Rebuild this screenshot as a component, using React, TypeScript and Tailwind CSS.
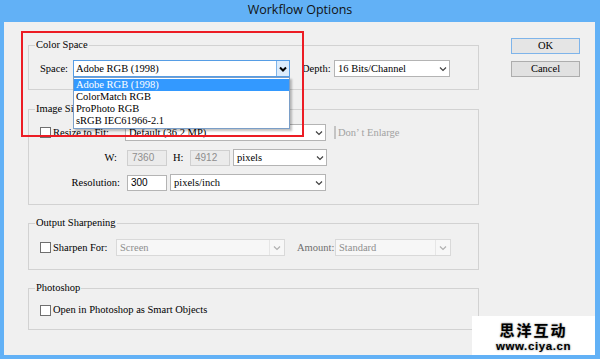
import React from "react";

const UI = { fontFamily: '"Liberation Serif", "Times New Roman", serif' };
const SANS = { fontFamily: '"Liberation Sans", Arial, sans-serif' };

function Chevron({ color = "#404040", bold = false }: { color?: string; bold?: boolean }) {
  return (
    <svg width="8" height="6" viewBox="0 0 8 6">
      <polyline
        points="1,1.5 4,4.5 7,1.5"
        fill="none"
        stroke={color}
        strokeWidth={bold ? 2 : 1.2}
      />
    </svg>
  );
}

function Select({
  cls,
  text,
  disabled = false,
}: {
  cls: string;
  text: string;
  disabled?: boolean;
}) {
  return (
    <div
      className={
        "h-[17px] flex items-center border " +
        (disabled
          ? "border-[#d9d9d9] bg-[#f7f7f7] text-[#8e8e8e] "
          : "border-[#b4b4b4] bg-white text-black ") +
        cls
      }
    >
      <span className="flex-1 pl-[3px] whitespace-nowrap overflow-hidden leading-[15px]">{text}</span>
      {disabled ? (
        <span className="w-[15px] h-full flex items-center justify-center border-l border-[#e6e6e6]">
          <Chevron color="#b0b0b0" />
        </span>
      ) : (
        <span className="w-[13px] h-full flex items-center justify-center">
          <Chevron />
        </span>
      )}
    </div>
  );
}

function Check({ disabled = false }: { disabled?: boolean }) {
  return (
    <span
      className={
        "w-[11px] h-[11px] border shrink-0 " +
        (disabled ? "border-[#c4c4c4] bg-[#e6e6e6]" : "border-[#6f6f6f] bg-white")
      }
    />
  );
}

function Group({
  title,
  cls,
  children,
}: {
  title: string;
  cls: string;
  children: React.ReactNode;
}) {
  return (
    <fieldset className={"border border-[#d2d2d2] " + cls}>
      <legend className="ml-[6px] px-[1px] leading-[12px] h-[12px]">{title}</legend>
      <div className="pl-[11px]">{children}</div>
    </fieldset>
  );
}

export default function App() {
  return (
    <div
      className="w-[600px] h-[359px] bg-[#62b1f6] flex flex-col relative overflow-hidden text-[10.5px] text-black"
      style={UI}
    >
      <div
        className="h-[22px] flex items-center justify-center text-[12.5px] text-[#111] pb-[1px]"
        style={{ fontFamily: '"Open Sans", "Noto Sans", sans-serif' }}
      >
        Workflow Options
      </div>
      <div className="flex-1 ml-[4px] mr-[5px] mb-[4px] bg-[#f0f0f0] flex pt-[16px] pl-[24px]">
        <div className="w-[451px] flex flex-col mt-[1px]">
          <Group title="Color Space" cls="pt-[9px] pb-[12px]">
            <div className="flex items-center h-[17px]">
              <span className="w-[33px]">Space:</span>
              <div className="h-[17px] w-[217px] flex items-center border border-[#569de5] bg-white">
                <span className="flex-1 pl-[2px] leading-[15px]">Adobe RGB (1998)</span>
                <span className="w-[13px] h-full flex items-center justify-center bg-[#dcecfc] border-l border-[#7eb4ea]">
                  <Chevron color="#000" bold />
                </span>
              </div>
              <span className="ml-[12px] w-[32px]">Depth:</span>
              <Select cls="w-[116px]" text="16 Bits/Channel" />
            </div>
          </Group>

          <Group title="Image Size" cls="mt-[13px] pt-[9px] pb-[13px]">
            <div className="flex items-center h-[17px]">
              <Check />
              <span className="ml-[2px] w-[72px]">Resize to Fit:</span>
              <Select cls="w-[201px]" text="Default  (36.2 MP)" />
              <span className="ml-[8px]">
                <Check disabled />
              </span>
              <span className="ml-[2px] text-[#a2a2a2]">Don’ t Enlarge</span>
            </div>
            <div className="flex items-center h-[17px] mt-[8px]">
              <span className="w-[77px] text-right">W:</span>
              <span
                className="ml-[10px] w-[40px] h-[16px] border border-[#cfcfcf] bg-[#ebebeb] text-[#8e8e8e] text-[10px] pl-[4px] leading-[14px]"
                style={SANS}
              >
                7360
              </span>
              <span className="ml-[6px] w-[17px]">H:</span>
              <span
                className="w-[40px] h-[16px] border border-[#cfcfcf] bg-[#ebebeb] text-[#8e8e8e] text-[10px] pl-[4px] leading-[14px]"
                style={SANS}
              >
                4912
              </span>
              <Select cls="ml-[3px] w-[94px]" text="pixels" />
            </div>
            <div className="flex items-center h-[17px] mt-[8px]">
              <span className="w-[80px] text-right">Resolution:</span>
              <span
                className="ml-[7px] w-[40px] h-[16px] border border-[#b4b4b4] bg-white text-black text-[10px] pl-[3px] leading-[14px]"
                style={SANS}
              >
                300
              </span>
              <Select cls="ml-[3px] w-[156px]" text="pixels/inch" />
            </div>
          </Group>

          <Group title="Output Sharpening" cls="mt-[12px] pt-[10px] pb-[13px]">
            <div className="flex items-center h-[17px]">
              <Check />
              <span className="ml-[2px] w-[63px]">Sharpen For:</span>
              <Select cls="w-[169px]" text="Screen" disabled />
              <span className="ml-[12px] w-[38px] text-[#6e6e6e]">Amount:</span>
              <Select cls="w-[116px]" text="Standard" disabled />
            </div>
          </Group>

          <Group title="Photoshop" cls="mt-[12px] pt-[8px] pb-[11px]">
            <div className="flex items-center h-[16px]">
              <Check />
              <span className="ml-[2px]">Open in Photoshop as Smart Objects</span>
            </div>
          </Group>
        </div>

        <div className="ml-[32px] flex flex-col gap-[7px]">
          <button className="w-[69px] h-[16px] border border-[#7eb4ea] bg-[#e5e5e5] text-[10.5px] leading-[14px]">
            OK
          </button>
          <button className="w-[69px] h-[16px] border border-[#adadad] bg-[#e1e1e1] text-[10.5px] leading-[14px]">
            Cancel
          </button>
        </div>
      </div>

      {/* open dropdown list */}
      <div className="absolute left-[73px] top-[77px] w-[217px] h-[52px] border border-[#7a9ec8] bg-white shadow-[2px_2px_2px_rgba(0,0,0,0.25)] flex flex-col pt-[1px]">
        <div className="h-[12px] bg-[#3399ff] text-white leading-[12px] pl-[2px]">Adobe RGB (1998)</div>
        <div className="h-[12px] leading-[12px] pl-[2px]">ColorMatch RGB</div>
        <div className="h-[12px] leading-[12px] pl-[2px]">ProPhoto RGB</div>
        <div className="h-[12px] leading-[12px] pl-[2px]">sRGB IEC61966-2.1</div>
      </div>

      {/* red highlight */}
      <div className="absolute left-[21px] top-[31px] w-[283px] h-[106px] border-2 border-[#ec1c24]" />

      {/* watermark */}
      <div className="absolute left-[472px] top-[316px] w-[123px] h-[39px] bg-white flex flex-col items-center justify-center">
        <span
          className="text-[15px] font-bold tracking-[2px] [text-shadow:0_0_2px_#777]"
          style={{ fontFamily: '"Noto Sans CJK SC", sans-serif', lineHeight: "normal" }}
        >
          思洋互动
        </span>
        <span
          className="text-[11.5px] font-bold tracking-[0.6px] [text-shadow:0_0_2px_#777]"
          style={{ ...SANS, lineHeight: "normal" }}
        >
          www.ciya.cn
        </span>
      </div>
    </div>
  );
}
